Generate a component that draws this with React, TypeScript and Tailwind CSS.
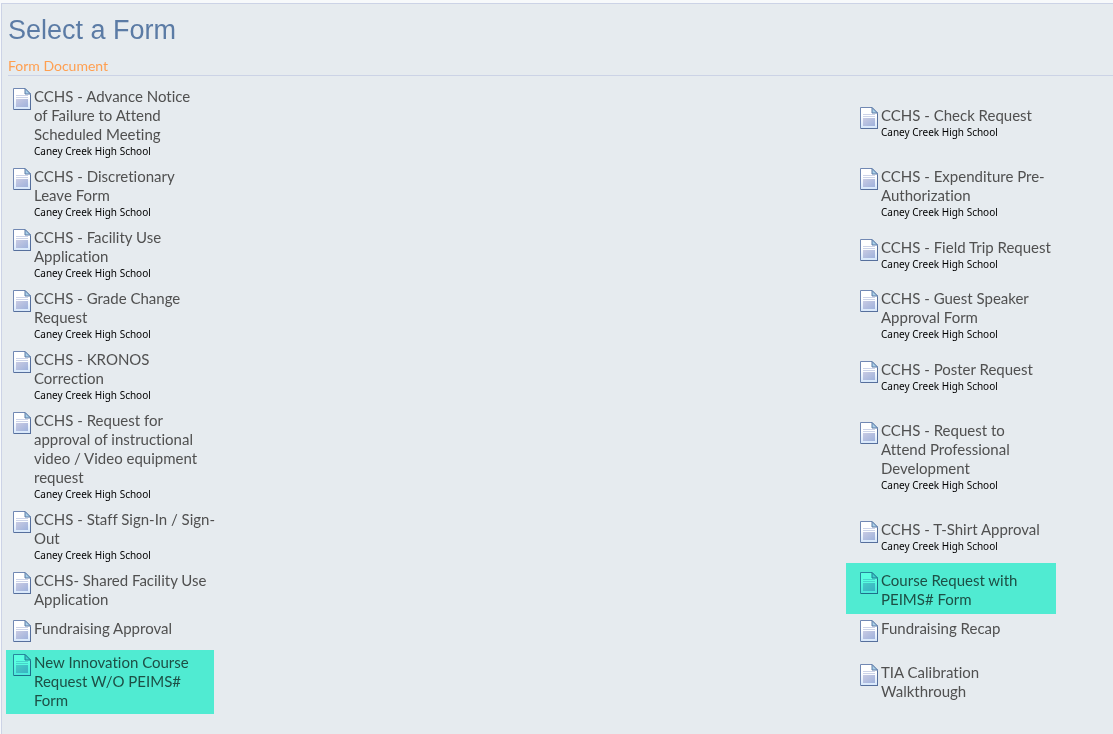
import React from "react";

type FormEntry = {
  name: string;
  campus?: string;
  // tailwind inset classes of the highlight marker
  mark?: string;
};

const campus = "Caney Creek High School";

const rows: [FormEntry, FormEntry][] = [
  [
    { name: "CCHS - Advance Notice\nof Failure to Attend\nScheduled Meeting", campus },
    { name: "CCHS - Check Request", campus },
  ],
  [
    { name: "CCHS - Discretionary\nLeave Form", campus },
    { name: "CCHS - Expenditure Pre-\nAuthorization", campus },
  ],
  [
    { name: "CCHS - Facility Use\nApplication", campus },
    { name: "CCHS - Field Trip Request", campus },
  ],
  [
    { name: "CCHS - Grade Change\nRequest", campus },
    { name: "CCHS - Guest Speaker\nApproval Form", campus },
  ],
  [
    { name: "CCHS - KRONOS\nCorrection", campus },
    { name: "CCHS - Poster Request", campus },
  ],
  [
    { name: "CCHS - Request for\napproval of instructional\nvideo / Video equipment\nrequest", campus },
    { name: "CCHS - Request to\nAttend Professional\nDevelopment", campus },
  ],
  [
    { name: "CCHS - Staff Sign-In / Sign-\nOut", campus },
    { name: "CCHS - T-Shirt Approval", campus },
  ],
  [
    { name: "CCHS- Shared Facility Use\nApplication" },
    { name: "Course Request with\nPEIMS# Form", mark: "-left-3.5 -top-2 -bottom-1 w-[210px]" },
  ],
  [{ name: "Fundraising Approval" }, { name: "Fundraising Recap" }],
  [
    { name: "New Innovation Course\nRequest W/O PEIMS#\nForm", mark: "-left-[7px] -top-[3px] -bottom-[3px] w-[208px]" },
    { name: "TIA Calibration\nWalkthrough" },
  ],
];

const DocumentIcon = () => (
  <svg width="18" height="22" viewBox="0 0 18 22" className="mt-px shrink-0" aria-hidden="true">
    <defs>
      <linearGradient id="sheet" x1="0" y1="0" x2="0" y2="1">
        <stop offset="0.4" stopColor="#ffffff" />
        <stop offset="1" stopColor="#d5e6fa" />
      </linearGradient>
      <linearGradient id="block" x1="0" y1="0" x2="1" y2="1">
        <stop offset="0" stopColor="#c9cbe3" />
        <stop offset="1" stopColor="#9fb2dc" />
      </linearGradient>
    </defs>
    <path d="M0.5 0.5H12L17.5 6V21.5H0.5Z" fill="url(#sheet)" stroke="#7188b3" />
    <path d="M12 0.5V6H17.5Z" fill="#a9d0e8" stroke="#5d7ba6" />
    <path d="M3 7.5H15M3 9.5H15" stroke="#ccd3e8" />
    <path d="M3 11H15V19H3Z" fill="url(#block)" />
    <path d="M1 21.5H18M17.5 7V22" stroke="#566f9c" />
  </svg>
);

const FormItem = ({ name, campus, mark }: FormEntry) => (
  <li className="relative flex min-h-[25px] w-[200px] items-start gap-[3px]">
    <DocumentIcon />
    <div className={campus ? "whitespace-pre" : "whitespace-pre pb-px"}>
      <a href="#" className="block text-[15px] leading-[19px] text-[#505050]">
        {name}
      </a>
      {campus && <p className="font-['Noto_Sans',sans-serif] text-[10px] leading-[14px] text-black">{campus}</p>}
    </div>
    {mark && <span className={`pointer-events-none absolute bg-[#59ffe0] mix-blend-multiply ${mark}`} />}
  </li>
);

const App = () => {
  return (
    <div className="flex min-h-screen flex-col bg-[#f7f9fb] pl-px pt-[3px] font-[Lato,sans-serif] [font-variant-ligatures:none]">
      <main className="grow border-l border-t border-[#ccd3e6] bg-[#e6ebef] pb-5">
        <header className="ml-1.5 border-b border-[#ccd3e6] pt-2.5">
          <h1 className="font-['Liberation_Sans',Arial,sans-serif] text-[27px] leading-8 text-[#5b7ba5]">
            Select a Form
          </h1>
          <h2 className="pt-2.5 text-[14px] leading-[19px] text-[#ff9f50]">Form Document</h2>
        </header>
        <ul className="grid grid-cols-[77%_1fr] items-center gap-y-[9px] pl-[11px] pt-[11px]">
          {rows.flat().map((form) => (
            <FormItem key={form.name} {...form} />
          ))}
        </ul>
      </main>
    </div>
  );
};

export default App;
